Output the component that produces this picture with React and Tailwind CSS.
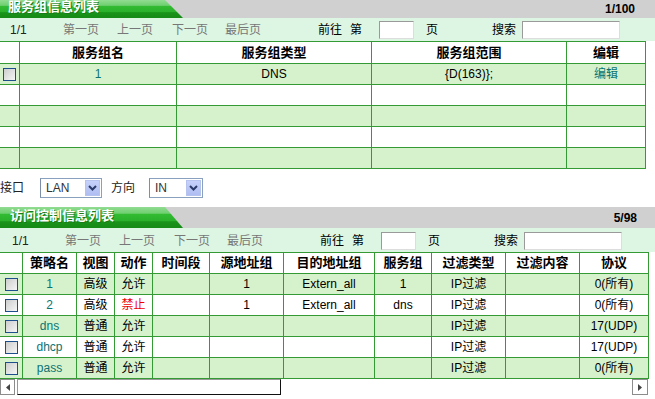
import React from 'react'

// flat versions of the old dotted backgrounds
const GRAY_BG = "bg-[#d0d0d0]"
const PAGER_BG = "bg-[#ddf6e3]"
const ROW_BG = "bg-[#d5f2cd]"

const GROUPS = [
  { name: "1", type: "DNS", range: "{D(163)};", edit: "编辑" },
  null, null, null, null,
]

const RULES = [
  { name: "1",    view: "高级", act: "允许", src: "1", dst: "Extern_all", svc: "1",   ftype: "IP过滤", proto: "0(所有)" },
  { name: "2",    view: "高级", act: "禁止", src: "1", dst: "Extern_all", svc: "dns", ftype: "IP过滤", proto: "0(所有)" },
  { name: "dns",  view: "普通", act: "允许", src: "",  dst: "",           svc: "",    ftype: "IP过滤", proto: "17(UDP)" },
  { name: "dhcp", view: "普通", act: "允许", src: "",  dst: "",           svc: "",    ftype: "IP过滤", proto: "17(UDP)" },
  { name: "pass", view: "普通", act: "允许", src: "",  dst: "",           svc: "",    ftype: "IP过滤", proto: "0(所有)" },
]

function TitleBar({ title, count, short }) {
  return (
    <div className={`flex ${short ? 'h-[18px]' : 'h-[21px]'} ${GRAY_BG}`}>
      <div className={`w-[183px] h-full [clip-path:polygon(0_0,165px_0,183px_100%,0_100%)] bg-[linear-gradient(to_bottom,#92dc92_0%,#6fcf6f_30%,#33bb33_34%,#2bb02b_66%,#199419_70%,#168a16_100%)] flex ${short ? 'items-start pl-[8px] pt-[0px]' : 'items-start pl-[10px] pt-[2px]'}`}>
        <span className="text-white font-bold text-[13px] leading-[13px] [text-shadow:1px_1px_0_#1a7a1a]">{title}</span>
      </div>
      <div className={`flex-1 flex justify-end ${short ? 'items-start pt-[3px] pr-[20px]' : 'items-center pt-[1px] pr-[18px]'}`}>
        <span className="text-[12px] leading-[13px] font-bold text-black">{count}</span>
      </div>
    </div>
  )
}

function Pager({ second }) {
  return (
    <div className={`flex items-center text-[12px] leading-[14px] ${PAGER_BG} ${second ? 'h-[24px] pl-[12px] pt-[1px]' : 'h-[23px] pl-[10px] pt-[1px]'}`}>
      <span className="w-[53px] text-[#222]">1/1</span>
      <span className="w-[54px] text-[#777]">第一页</span>
      <span className="w-[55px] text-[#777]">上一页</span>
      <span className="w-[53px] text-[#777]">下一页</span>
      <span className="w-[93px] text-[#777]">最后页</span>
      <span className="w-[32px] text-black">前往</span>
      <span className="w-[29px] text-black">第</span>
      <div className="w-[35px] h-[18px] bg-white border border-t-[#9a9a9a] border-l-[#9a9a9a] border-b-[#dddddd] border-r-[#dddddd]" />
      <span className="ml-[12px] w-[66px] text-black">页</span>
      <span className="w-[30px] text-black">搜索</span>
      <div className="w-[98px] h-[18px] bg-white border border-t-[#9a9a9a] border-l-[#9a9a9a] border-b-[#dddddd] border-r-[#dddddd]" />
    </div>
  )
}

function Check() {
  return <div className="w-[13px] h-[13px] border border-[#1d4f8c] bg-[linear-gradient(135deg,#cdcdcd,#f6f6f6)]" />
}

function GroupTable() {
  const cols = "grid grid-cols-[20px_157px_195px_195px_79px] w-[646px]"
  const cell = "border-r border-b border-[#349a34] flex items-center justify-center"
  return (
    <div className="border-t border-[#349a34] w-[646px]">
      <div className={`${cols} h-[22px] bg-white text-[13px] font-bold text-black`}>
        <div className={cell}></div>
        <div className={cell}>服务组名</div>
        <div className={cell}>服务组类型</div>
        <div className={cell}>服务组范围</div>
        <div className={cell}>编辑</div>
      </div>
      {GROUPS.map((g, i) => (
        <div key={i} className={`${cols} h-[21px] text-[12px] ${i % 2 === 0 ? ROW_BG : 'bg-white'}`}>
          <div className={`${cell} justify-start pl-[3px]`}>{g && <Check />}</div>
          <div className={`${cell} text-[#0b7272]`}>{g?.name}</div>
          <div className={`${cell} text-black`}>{g?.type}</div>
          <div className={`${cell} text-black`}>{g?.range}</div>
          <div className={`${cell} text-[#0b7272]`}>{g?.edit}</div>
        </div>
      ))}
    </div>
  )
}

function RuleTable() {
  const cols = "grid grid-cols-[23px_54px_38px_38px_57px_74px_91px_57px_74px_74px_69px] w-[649px]"
  const cell = "border-r border-b border-[#349a34] flex items-center justify-center"
  const heads = ["策略名", "视图", "动作", "时间段", "源地址组", "目的地址组", "服务组", "过滤类型", "过滤内容", "协议"]
  return (
    <div className="border-t border-[#349a34] w-[649px]">
      <div className={`${cols} h-[21px] bg-white text-[13px] font-bold text-black`}>
        <div className={cell}></div>
        {heads.map(h => <div key={h} className={cell}>{h}</div>)}
      </div>
      {RULES.map((r, i) => (
        <div key={i} className={`${cols} h-[21px] text-[12px] text-black ${i % 2 === 0 ? ROW_BG : 'bg-white'}`}>
          <div className={`${cell} justify-start pl-[5px]`}><Check /></div>
          <div className={`${cell} text-[#0b7272]`}>{r.name}</div>
          <div className={cell}>{r.view}</div>
          <div className={`${cell} ${r.act === '禁止' ? 'text-[#ee0000]' : ''}`}>{r.act}</div>
          <div className={cell}></div>
          <div className={cell}>{r.src}</div>
          <div className={cell}>{r.dst}</div>
          <div className={cell}>{r.svc}</div>
          <div className={cell}>{r.ftype}</div>
          <div className={cell}></div>
          <div className={cell}>{r.proto}</div>
        </div>
      ))}
    </div>
  )
}

function Select({ value, width }) {
  return (
    <div className={`${width} h-[20px] flex items-center justify-between border border-[#8aa0bf] border-l-[#7d8fa8] bg-white pl-[5px] pr-[1px]`}>
      <span className="text-[12px] text-[#333]">{value}</span>
      <div className="w-[15px] h-[16px] flex items-center justify-center bg-[linear-gradient(to_bottom,#c6d2fa,#aebdf2)] border border-[#b5c3ee]">
        <svg width="9" height="6" viewBox="0 0 9 6"><path d="M1 1 L4.5 4.5 L8 1" fill="none" stroke="#2a3a6a" strokeWidth="2" /></svg>
      </div>
    </div>
  )
}

function ScrollBar() {
  return (
    <div className="flex items-start h-[17px] w-[648px]">
      <div className="w-[15px] h-[16px] bg-white border border-[#8c8c8c] flex items-center justify-center">
        <svg width="4" height="7" viewBox="0 0 4 7"><path d="M4 0 L0 3.5 L4 7 Z" fill="#444" /></svg>
      </div>
      <div className="ml-[2px] w-[264px] h-[16px] bg-white border border-t-[#999] border-l-[#999] border-b-[#111] border-r-[#111]" />
      <div className="flex-1" />
      <div className="w-[16px] h-[16px] bg-white border border-[#8c8c8c] flex items-center justify-center">
        <svg width="4" height="7" viewBox="0 0 4 7"><path d="M0 0 L4 3.5 L0 7 Z" fill="#444" /></svg>
      </div>
    </div>
  )
}

export default function App() {
  return (
    <div className="w-[655px] h-[399px] overflow-hidden bg-white font-['Liberation_Sans','Noto_Sans_CJK_SC',sans-serif]">
      <TitleBar title="服务组信息列表" count="1/100" short />
      <Pager />
      <GroupTable />

      <div className="mt-[9px] h-[20px] flex items-center text-[12px] text-[#222]">
        <span className="w-[40px]">接口</span>
        <Select value="LAN" width="w-[62px]" />
        <span className="ml-[9px] w-[38px]">方向</span>
        <Select value="IN" width="w-[54px]" />
      </div>

      <div className="mt-[9px]">
        <TitleBar title="访问控制信息列表" count="5/98" />
      </div>
      <Pager second />
      <RuleTable />
      <ScrollBar />
    </div>
  )
}
